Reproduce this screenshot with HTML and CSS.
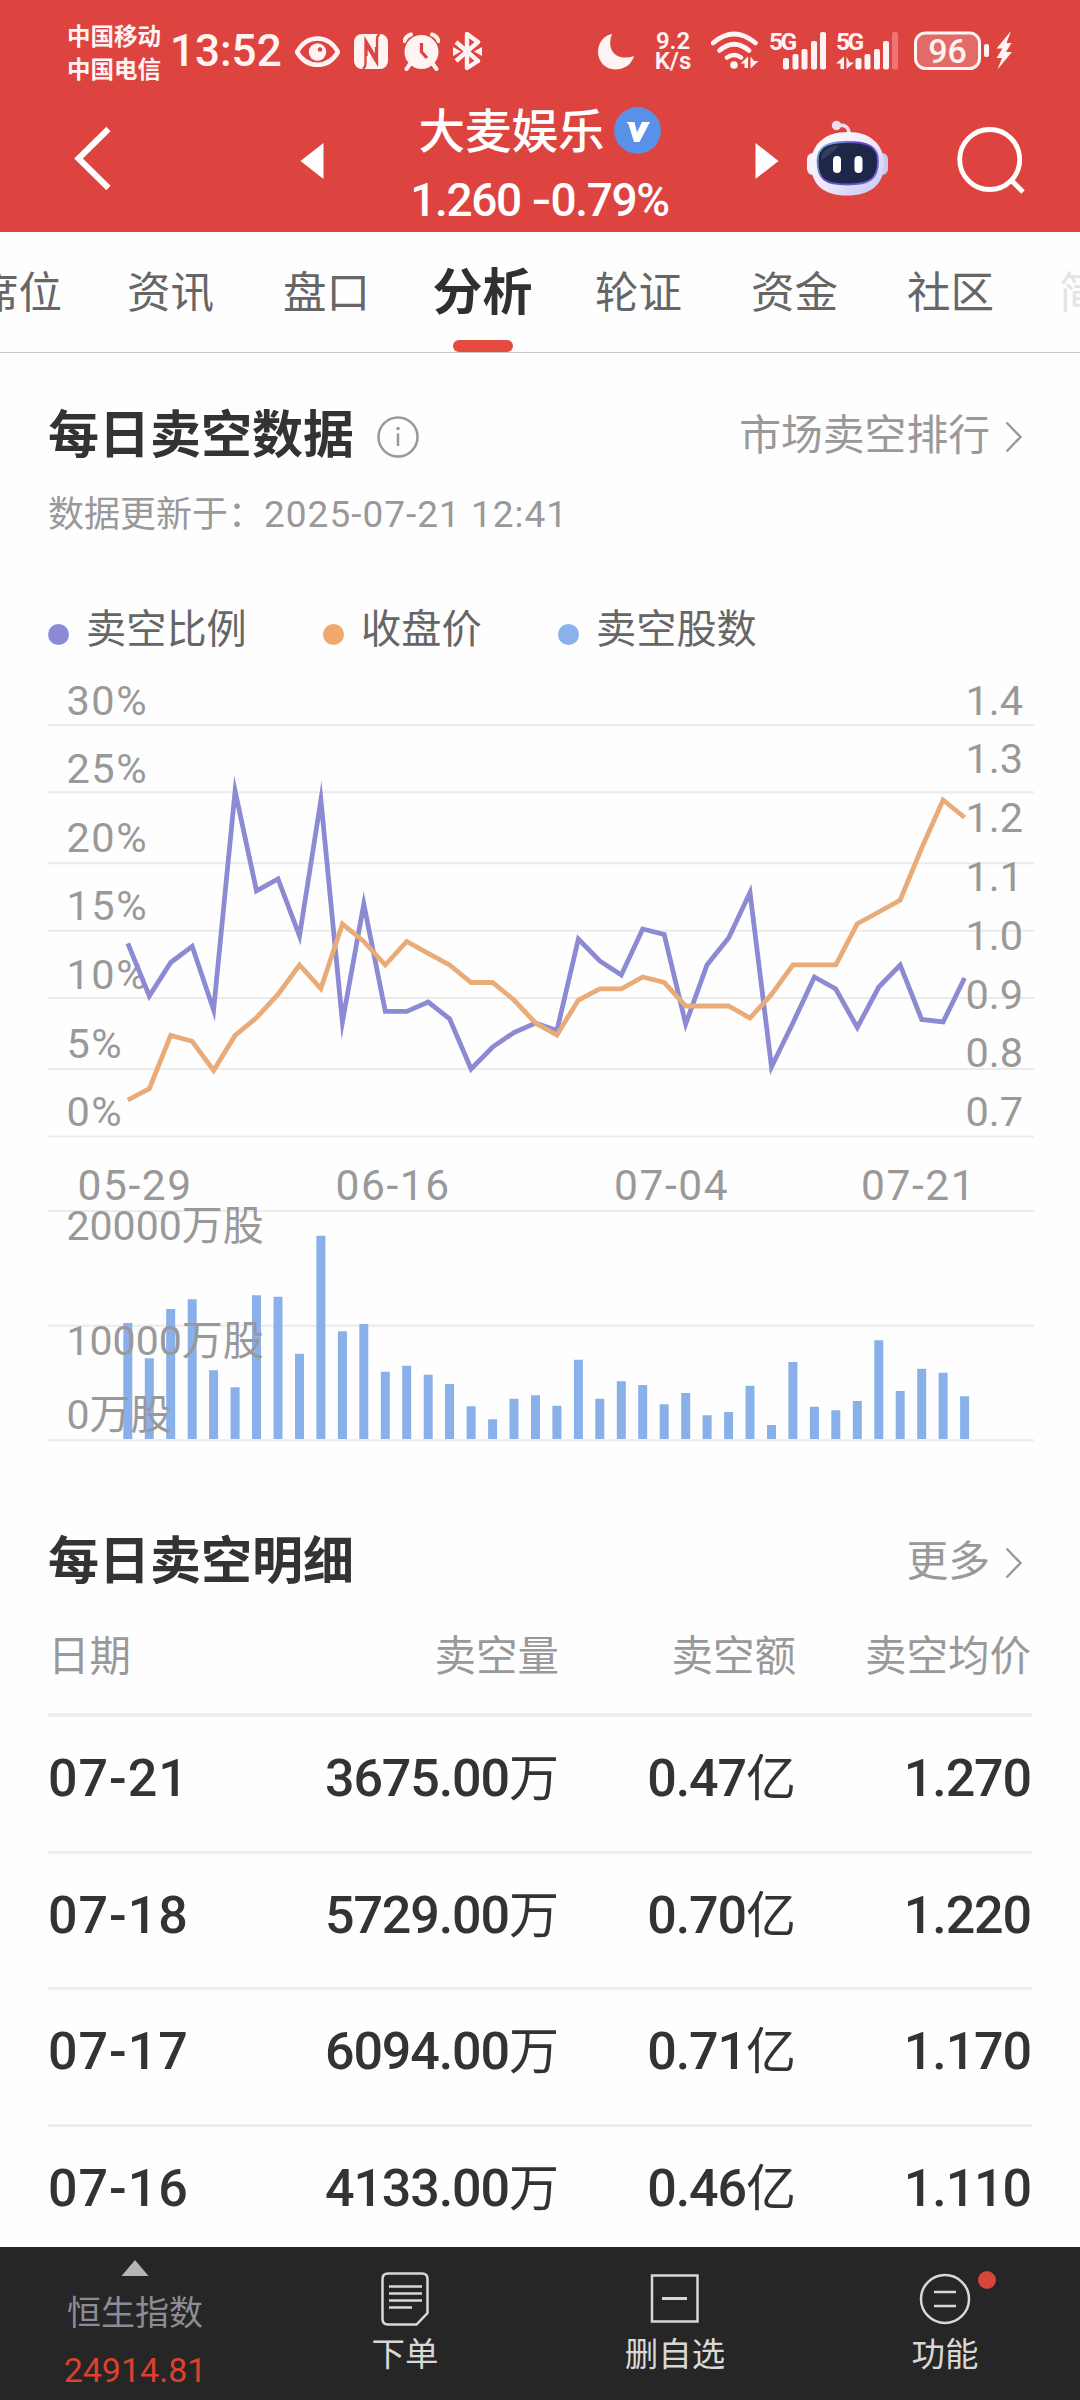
FILE: index.html
```html
<!DOCTYPE html>
<html lang="zh-CN">
<head>
  <meta charset="UTF-8">
  <title>大麦娱乐 - 分析</title>
  <link rel="stylesheet" href="styles.css">
</head>
<body>
  <div class="app">
    <header class="header">
      <div class="status-bar">
        <div class="status-left">
          <div class="carriers">
            <span>中国移动</span>
            <span>中国电信</span>
          </div>
          <span class="clock">13:52</span>
          <svg class="eye" width="45" height="40" viewBox="295 31 45 40">
            <path d="M297 52C307 34 328 34 338 52C328 69 307 69 297 52Z" fill="none" stroke="#fff3f3" stroke-width="4.500"/>
            <circle cx="317.500" cy="52" r="8.700" fill="#fff3f3"/>
            <circle cx="320" cy="49.500" r="2.200" fill="#dd4440"/>
          </svg>
          <svg class="nfc" width="34" height="40" viewBox="354 31 34 40">
            <rect x="354" y="34" width="34" height="35" rx="8" fill="#fff3f3"/>
            <path d="M363 69Q365.500 67 365.500 64V40L376 57.500V47" fill="none" stroke="#dd4440" stroke-width="2.300"/>
            <path d="M379.500 34Q377 36 377 39V63L366.500 45.500V56" fill="none" stroke="#dd4440" stroke-width="2.300"/>
          </svg>
          <svg class="alarm" width="37" height="40" viewBox="403 31 37 40">
            <circle cx="421.500" cy="52" r="17" fill="#fff3f3"/>
            <path d="M404.500 41Q406 36 411 34.500M438.500 41Q437 36 432 34.500M410 64L406.500 69M433 64L436.500 69" fill="none" stroke="#fff3f3" stroke-width="4" stroke-linecap="round"/>
            <path d="M421.500 43V52L427 58" fill="none" stroke="#dd4440" stroke-width="3.200"/>
          </svg>
          <svg class="bluetooth" width="30" height="40" viewBox="453 31 30 40">
            <path d="M456 42L478 61L467 68V34L478 42L456 61" fill="none" stroke="#fff3f3" stroke-width="4.400" stroke-linejoin="round"/>
            <path d="M453 47L461 51.500L453 56ZM482 47L474 51.500L482 56Z" fill="#fff3f3"/>
          </svg>
        </div>
        <div class="status-right">
          <svg width="36" height="40" viewBox="598 31 36 40">
            <path d="M612 34C606 50 616 62 634 56C631 66 623 69.500 615 69.500C605 69.500 598 61 598 52C598 43 604 35 612 34Z" fill="#fff3f3"/>
          </svg>
          <div class="speed">
            <span>9.2</span>
            <span>K/s</span>
          </div>
          <svg class="wifi" width="48" height="40" viewBox="711 31 48 40">
            <path d="M713 43Q734 25 755.500 43M719.500 50.500Q734 38 749 50.500M727 57.500Q734 52.500 741 57.500" fill="none" stroke="#fff3f3" stroke-width="4.600" stroke-linecap="round"/>
            <circle cx="734" cy="65" r="3.800" fill="#fff3f3"/>
            <path d="M748 56.500V68H744.500V63.500H740.500ZM750.500 56.500V68.500L758.500 61H754Z" fill="#fff3f3"/>
          </svg>
          <svg class="signal" width="56" height="40" viewBox="769 31 56 40">
            <text class="signal-label" x="768" y="50">5G</text>
            <g fill="#fff3f3">
              <rect x="782" y="58" width="6" height="11.500" rx="2"/>
              <rect x="791.500" y="54" width="6" height="15.500" rx="2"/>
              <rect x="800.500" y="49" width="6" height="20.500" rx="2"/>
              <rect x="810" y="41" width="6" height="28.500" rx="2"/>
              <rect x="819" y="32" width="6" height="37.500" rx="2"/>
            </g>
          </svg>
          <svg class="signal" width="62" height="40" viewBox="836 31 62 40">
            <text class="signal-label" x="836" y="50">5G</text>
            <path d="M844 56.500V69H840.500V63.500H836ZM846.500 56.500V69L854 62.500H849.500Z" fill="#fff3f3"/>
            <g fill="#fff3f3">
              <rect x="855.500" y="58" width="6" height="11.500" rx="2"/>
              <rect x="864.500" y="54" width="6" height="15.500" rx="2"/>
              <rect x="874" y="49" width="6" height="20.500" rx="2"/>
              <rect x="883" y="41" width="6" height="28.500" rx="2"/>
              <rect x="892" y="32" width="6" height="37.500" rx="2" fill="#ee7574"/>
            </g>
          </svg>
          <svg class="battery" width="75" height="40" viewBox="914 31 75 40">
            <rect x="915.500" y="33" width="64" height="35.500" rx="10" fill="#e36b67" stroke="#fff3f3" stroke-width="3"/>
            <rect x="984" y="44" width="5" height="13" rx="2" fill="#fff3f3"/>
            <text class="battery-label" x="947.500" y="62.800">96</text>
          </svg>
          <svg class="bolt" width="16" height="40" viewBox="996 31 16 40">
            <path d="M1011 31L996.500 48.500H1002.500L996.500 58H1002L997.500 69.500L1012 52H1006L1011.500 43H1006.500Z" fill="#fff3f3"/>
          </svg>
        </div>
      </div>

      <nav class="nav">
        <div class="nav-back">
          <svg width="40" height="66" viewBox="74 126 40 66">
            <path d="M108.500 129L78.500 158.500L108.500 188" fill="none" stroke="#fff" stroke-width="6"/>
          </svg>
        </div>
        <svg class="arrow" width="24" height="36" viewBox="0 0 24 36"><path d="M0.500 18L23.500 0V36Z" fill="#fff"/></svg>
        <div class="stock">
          <div class="stock-name">
            <span>大麦娱乐</span>
            <svg width="47" height="47" viewBox="0 0 47 47">
              <circle cx="23.500" cy="23.500" r="23.400" fill="#5a91e8"/>
              <path d="M12 15H20.500L23 25.500L28 15H36L25.500 35H20L14.500 17Z" fill="#fff"/>
            </svg>
          </div>
          <div class="stock-price">1.260 <span class="minus">-</span>0.79%</div>
        </div>
        <svg class="arrow" width="24" height="36" viewBox="0 0 24 36"><path d="M23.500 18L0.500 0V36Z" fill="#fff"/></svg>
        <div class="nav-tools">
          <svg width="82" height="78" viewBox="807 120 82 78">
            <defs>
              <linearGradient id="shell" x1="0" y1="0" x2="1" y2="1">
                <stop offset="0" stop-color="#fff"/>
                <stop offset="0.500" stop-color="#eeeafa"/>
                <stop offset="1" stop-color="#c3c6ee"/>
              </linearGradient>
              <linearGradient id="rim" x1="0" y1="0" x2="1" y2="0.600">
                <stop offset="0" stop-color="#7fc9dc"/>
                <stop offset="0.500" stop-color="#6a3fc4"/>
                <stop offset="1" stop-color="#6a5fe0"/>
              </linearGradient>
            </defs>
            <path d="M836 126Q849 123 849 134" fill="none" stroke="#f1dcea" stroke-width="3.500"/>
            <circle cx="836.500" cy="125.500" r="4.700" fill="#efdcec"/>
            <rect x="807" y="153" width="12" height="22" rx="6" fill="#f6f3fc"/>
            <rect x="876" y="153" width="12" height="22" rx="6" fill="#c9caf0"/>
            <path d="M848 132C871 132 884 145 884 164C884 185 870 195.500 847 195.500C824 195.500 811 185 811 164C811 145 824 132 848 132Z" fill="url(#shell)"/>
            <path d="M847.500 142C869 142 878 147 878 161C878 179 870 184.500 847.500 184.500C825 184.500 817.500 179 817.500 161C817.500 147 826 142 847.500 142Z" fill="#1d2748" stroke="url(#rim)" stroke-width="1.800"/>
            <path d="M821 160C821 150 829 146 839 145Q832 154 821 160Z" fill="#454d6b" opacity="0.600"/>
            <rect x="833" y="156" width="8" height="17" rx="4" fill="#fff"/>
            <rect x="854.500" y="156" width="8" height="17" rx="4" fill="#fff"/>
          </svg>
          <svg class="search" width="70" height="70" viewBox="956 125 70 70">
            <circle cx="989.700" cy="159.500" r="30" fill="none" stroke="#fff" stroke-width="4.800"/>
            <path d="M1011 180L1023 192" stroke="#fff" stroke-width="5"/>
          </svg>
        </div>
      </nav>
    </header>

    <div class="tabs">
      <a class="first">席位</a>
      <a>资讯</a>
      <a>盘口</a>
      <a class="active">分析</a>
      <a>轮证</a>
      <a>资金</a>
      <a>社区</a>
      <a class="faded">简况</a>
    </div>

    <main class="content">
      <section class="daily">
        <div class="section-head">
          <h2>每日卖空数据</h2>
          <svg class="info" width="44" height="44" viewBox="0 0 44 44">
            <circle cx="22" cy="22" r="19.500" fill="none" stroke="#999" stroke-width="2.500"/>
            <circle cx="22" cy="13.500" r="1.800" fill="#999"/>
            <path d="M22 18.500V31" stroke="#999" stroke-width="2.500"/>
          </svg>
          <a class="more">市场卖空排行
            <svg width="18" height="32" viewBox="0 0 18 32"><path d="M1.500 1.500L15.500 16L1.500 30.500" fill="none" stroke="#999" stroke-width="2.400"/></svg>
          </a>
        </div>
        <p class="updated">数据更新于：<span>2025-07-21 12:41</span></p>
        <div class="legend">
          <span class="legend-item ratio">卖空比例</span>
          <span class="legend-item price">收盘价</span>
          <span class="legend-item volume">卖空股数</span>
        </div>
      </section>

      <svg class="chart" width="1080" height="780" viewBox="0 680 1080 780">
        <g class="grid">
          <path d="M48 725H1034M48 792.300H1034M48 863.300H1034M48 930.700H1034M48 998H1034M48 1069H1034M48 1136.400H1034"/>
          <path d="M48 1211H1034M48 1325.700H1034M48 1440.300H1034"/>
        </g>
        <!-- short volume bars -->
        <path class="bars" d="M127.800 1439V1323M149.300 1439V1358.300M170.700 1439V1309M192.200 1439V1299.300M213.600 1439V1370.300M235.100 1439V1387.300M256.500 1439V1295.300M278 1439V1296.700M299.500 1439V1353.700M320.900 1439V1235.700M342.400 1439V1331.300M363.800 1439V1324M385.300 1439V1371.700M406.700 1439V1365.700M428.200 1439V1374.700M449.600 1439V1384M471.100 1439V1406.300M492.600 1439V1419.300M514 1439V1398.700M535.500 1439V1395.300M556.900 1439V1405.700M578.400 1439V1359.700M599.800 1439V1398.700M621.300 1439V1381.300M642.700 1439V1385M664.200 1439V1404.300M685.700 1439V1393M707.100 1439V1415.300M728.600 1439V1412M750 1439V1385.700M771.500 1439V1425M792.900 1439V1362M814.400 1439V1406.700M835.800 1439V1410.300M857.300 1439V1401M878.800 1439V1340.300M900.200 1439V1391M921.700 1439V1368.700M943.100 1439V1372.700M964.600 1439V1396.300"/>

        <g class="axis axis-left">
          <text x="66.500" y="715">30%</text>
          <text x="66.500" y="782.700">25%</text>
          <text x="66.500" y="851.500">20%</text>
          <text x="66.500" y="919.600">15%</text>
          <text x="66.500" y="988.800">10%</text>
          <text x="66.500" y="1057.600">5%</text>
          <text x="66.500" y="1125.700">0%</text>
        </g>
        <g class="axis axis-right">
          <text x="1023" y="715">1.4</text>
          <text x="1023" y="773">1.3</text>
          <text x="1023" y="832.300">1.2</text>
          <text x="1023" y="891">1.1</text>
          <text x="1023" y="949.600">1.0</text>
          <text x="1023" y="1008.800">0.9</text>
          <text x="1023" y="1067.200">0.8</text>
          <text x="1023" y="1125.700">0.7</text>
        </g>
        <g class="axis axis-dates">
          <text x="77.500" y="1200">05-29</text>
          <text x="335.500" y="1200">06-16</text>
          <text x="614" y="1200">07-04</text>
          <text x="861" y="1200">07-21</text>
        </g>
        <g class="axis axis-volume">
          <text x="66.500" y="1240">20000万股</text>
          <text x="66.500" y="1355">10000万股</text>
          <text x="66.500" y="1428.700">0万股</text>
        </g>

        <!-- short ratio -->
        <polyline class="line-ratio" points="127.800,943.300 149.300,996 170.700,962.500 192.200,946.300 213.600,1010 235.100,791 256.500,890.800 278,879 299.500,936 320.900,800 342.400,1022 363.800,904 385.300,1011.400 406.700,1011.400 428.200,1002 449.600,1018.800 471.100,1069 492.600,1047 514,1032.500 535.500,1023 556.900,1030.600 578.400,939 599.800,961 621.300,975 642.700,929 664.200,934.400 685.700,1024 707.100,964.800 728.600,938 750,892.600 771.500,1067 792.900,1023 814.400,977 835.800,989 857.300,1027.500 878.800,987 900.200,965 921.700,1019.500 943.100,1022 964.600,978"/>
        <!-- closing price -->
        <polyline class="line-price" points="127.800,1100 149.300,1088.700 170.700,1035.400 192.200,1041.300 213.600,1070.500 235.100,1035.400 256.500,1017.700 278,994.400 299.500,965 320.900,988.500 342.400,924 363.800,941.500 385.300,965 406.700,941.500 428.200,953.300 449.600,965 471.100,982.500 492.600,982.500 514,1000 535.500,1023 556.900,1035 578.400,1000 599.800,988.800 621.300,988.800 642.700,977 664.200,982.500 685.700,1006 707.100,1006 728.600,1006 750,1018 771.500,994.400 792.900,964.800 814.400,964.800 835.800,964.800 857.300,923.700 878.800,912 900.200,900 921.700,848 943.100,800 964.600,817.500"/>
      </svg>

      <section class="detail">
        <div class="section-head">
          <h2>每日卖空明细</h2>
          <a class="more">更多
            <svg width="18" height="32" viewBox="0 0 18 32"><path d="M1.500 1.500L15.500 16L1.500 30.500" fill="none" stroke="#999" stroke-width="2.400"/></svg>
          </a>
        </div>
        <div class="row row-head">
          <span>日期</span><span>卖空量</span><span>卖空额</span><span>卖空均价</span>
        </div>
        <div class="row">
          <span class="date">07-21</span><span>3675.00<b>万</b></span><span>0.47<b>亿</b></span><span>1.270</span>
        </div>
        <div class="row">
          <span class="date">07-18</span><span>5729.00<b>万</b></span><span>0.70<b>亿</b></span><span>1.220</span>
        </div>
        <div class="row">
          <span class="date">07-17</span><span>6094.00<b>万</b></span><span>0.71<b>亿</b></span><span>1.170</span>
        </div>
        <div class="row">
          <span class="date">07-16</span><span>4133.00<b>万</b></span><span>0.46<b>亿</b></span><span>1.110</span>
        </div>
      </section>
    </main>

    <footer class="bottom-bar">
      <div class="index">
        <svg width="28" height="16" viewBox="0 0 28 16"><path d="M14 0L27.500 16H0.500Z" fill="#b5b5b5"/></svg>
        <span class="index-name">恒生指数</span>
        <span class="index-value">24914.81</span>
      </div>
      <div class="action">
        <svg width="60" height="60" viewBox="375 2269 60 60">
          <path d="M388 2273.500H422Q427.500 2273.500 427.500 2279V2313L416.500 2324.500H388Q382.500 2324.500 382.500 2319V2279Q382.500 2273.500 388 2273.500Z" fill="none" stroke="#d8d8d8" stroke-width="2.500"/>
          <path d="M389 2286.500H422M389 2293.500H422M389 2300.500H422M389 2307.500H412" stroke="#d8d8d8" stroke-width="2.600"/>
        </svg>
        <span>下单</span>
      </div>
      <div class="action">
        <svg width="60" height="60" viewBox="645 2269 60 60">
          <rect x="652" y="2275.500" width="45.500" height="46" fill="none" stroke="#d8d8d8" stroke-width="2.500"/>
          <path d="M662 2298.500H687" stroke="#d8d8d8" stroke-width="3"/>
        </svg>
        <span>删自选</span>
      </div>
      <div class="action">
        <svg width="60" height="60" viewBox="915 2269 60 60">
          <circle cx="945" cy="2299" r="24" fill="none" stroke="#d8d8d8" stroke-width="2.500"/>
          <path d="M934 2292H956M934 2306H956" stroke="#d8d8d8" stroke-width="2.600"/>
        </svg>
        <span>功能</span>
        <i class="dot"></i>
      </div>
    </footer>
  </div>
</body>
</html>
```
FILE: styles.css
```css
/* General */
* {
  box-sizing: border-box;
}

body {
  margin: 0;
  background-color: #fefefe;
  font-family: Roboto, "Noto Sans CJK SC", sans-serif;
  color: #333;
}

svg {
  display: block;
  flex-shrink: 0;
}

.app {
  width: 1080px;
  height: 2400px;
  display: flex;
  flex-direction: column;
  overflow: hidden;
}

/* Header */
.header {
  height: 232px;
  flex-shrink: 0;
  background-color: #dd4440;
  color: #fff;
}

.status-bar {
  height: 102px;
  padding: 0 68px 0 67px;
  display: flex;
  justify-content: space-between;
  align-items: center;
  color: #fff3f3;
}

.status-left,
.status-right {
  display: flex;
  align-items: center;
}

.carriers {
  width: 103px;
  display: flex;
  flex-direction: column;
  font-size: 23.5px;
  font-weight: 700;
  line-height: 33px;
  padding-top: 6px;
}

.clock {
  width: 112px;
  font-size: 44px;
  font-weight: 500;
  line-height: 50px;
  white-space: nowrap;
}

.eye {
  margin-left: 13px;
}

.nfc {
  margin-left: 14px;
}

.alarm {
  margin-left: 15px;
}

.bluetooth {
  margin-left: 13px;
}

.speed {
  width: 42px;
  margin-left: 18px;
  display: flex;
  flex-direction: column;
  align-items: center;
  font-size: 24px;
  font-weight: 600;
  line-height: 20px;
}

.wifi {
  margin-left: 17px;
}

.signal {
  margin-left: 10.5px;
  overflow: visible;
}

.signal-label {
  font-size: 24.5px;
  font-weight: 700;
  letter-spacing: -2.5px;
  fill: #fff3f3;
}

.battery {
  margin-left: 16px;
}

.battery-label {
  font-size: 34px;
  font-weight: 500;
  text-anchor: middle;
  fill: #fff3f3;
}

.bolt {
  margin-left: 7px;
}

.nav {
  height: 130px;
  display: grid;
  grid-template-columns: 300px 24px 1fr 24px 301px;
}

.nav-back {
  padding: 24px 0 0 74px;
}

.arrow {
  margin-top: 41px;
}

.stock {
  display: flex;
  flex-direction: column;
  align-items: center;
}

.stock-name {
  display: flex;
  align-items: center;
  gap: 9px;
  height: 56px;
  font-size: 46.5px;
  font-weight: 500;
}

.stock-name span {
  padding-top: 4px;
  line-height: 56px;
}

.stock-price {
  font-size: 46px;
  font-weight: 500;
  line-height: 56px;
  padding-top: 13px;
  letter-spacing: -1.4px;
  white-space: nowrap;
}

.minus {
  font-family: Inter, sans-serif;
}

.nav-tools {
  display: flex;
  align-items: flex-start;
  padding: 18px 0 0 28px;
}

.search {
  margin: 5px 0 0 67px;
}

/* Tabs */
.tabs {
  height: 121px;
  flex-shrink: 0;
  display: flex;
  margin-left: -63.5px;
  border-bottom: 1.5px solid #c8c8c8;
}

.tabs a {
  position: relative;
  width: 156px;
  flex-shrink: 0;
  padding-top: 3px;
  text-align: center;
  font-size: 43.5px;
  line-height: 117px;
  color: #666;
}

.tabs .first {
  padding-left: 8px;
}

.tabs .active {
  font-size: 50px;
  font-weight: 700;
  color: #303030;
}

.tabs .active::after {
  content: "";
  position: absolute;
  left: 48px;
  bottom: 0;
  width: 60px;
  height: 12px;
  border-radius: 6px;
  background-color: #e44b3e;
}

.tabs .faded {
  padding-right: 8px;
  color: #e4e4e4;
}

/* Content */
.content {
  flex: 1;
  min-height: 0;
  overflow: hidden;
}

.daily {
  padding: 48px 48px 0;
}

.section-head {
  height: 70px;
  display: flex;
  align-items: center;
}

.section-head h2 {
  margin: 0;
  font-size: 51px;
  font-weight: 700;
  line-height: 70px;
}

.info {
  margin: 1px 0 0 22px;
}

.more {
  margin-left: auto;
  padding-right: 9px;
  display: flex;
  align-items: center;
  gap: 15px;
  font-size: 41.8px;
  line-height: 70px;
  color: #999;
}

.more svg {
  margin-top: 2px;
}

.updated {
  margin: 0;
  font-size: 36px;
  line-height: 88px;
  color: #999;
}

.updated span {
  font-size: 37px;
  letter-spacing: 1px;
}

.legend {
  display: flex;
  height: 103px;
  margin-top: 18px;
  align-items: center;
}

.legend-item {
  display: flex;
  align-items: center;
  padding-top: 2px;
  font-size: 40.2px;
  line-height: 60px;
  color: #666;
}

.legend-item::before {
  content: "";
  width: 21px;
  height: 21px;
  margin: 10px 17px 0 0;
  border-radius: 50%;
}

.ratio {
  width: 275px;
}

.price {
  width: 235px;
}

.ratio::before {
  background-color: #8b8ad8;
}

.price::before {
  background-color: #efa96c;
}

.volume::before {
  background-color: #8ab1ec;
}

/* Chart */
.grid path {
  stroke: #ebebeb;
  stroke-width: 2;
}

.bars {
  stroke: #8ab0ea;
  stroke-width: 9;
}

.axis {
  fill: #999;
  font-size: 41.5px;
}

.axis-left {
  letter-spacing: 1.5px;
}

.axis-right {
  text-anchor: end;
}

.axis-dates {
  font-size: 42.5px;
  letter-spacing: 1.6px;
}

.axis-volume {
  font-size: 41px;
}

.line-ratio,
.line-price {
  fill: none;
  stroke-width: 4.8;
  stroke-miterlimit: 20;
}

.line-ratio {
  stroke: #8b8ad2;
}

.line-price {
  stroke: #e9ac78;
}

/* Detail table */
.detail {
  padding: 67px 48px 0;
}

.row {
  display: grid;
  grid-template-columns: 200px 311px 237px 235px;
  height: 136.5px;
  padding-bottom: 9px;
  border-bottom: 3px solid #eee;
  align-items: center;
  font-size: 52px;
  font-weight: 500;
  letter-spacing: -1.1px;
  line-height: 70px;
  white-space: nowrap;
}

.row span {
  text-align: right;
}

.row span:first-child {
  text-align: left;
}

.row b {
  font-size: 50px;
  font-weight: 400;
  letter-spacing: 0;
}

.row .date {
  letter-spacing: 1px;
}

.row-head {
  height: 120px;
  padding-bottom: 0;
  border-bottom-width: 4px;
  font-size: 41.5px;
  font-weight: 400;
  letter-spacing: 0;
  color: #999;
}

.row-head span {
  padding-top: 3px;
}

/* Bottom bar */
.bottom-bar {
  height: 153px;
  flex-shrink: 0;
  display: grid;
  grid-template-columns: repeat(4, 1fr);
  background-color: #262626;
  color: #d8d8d8;
}

.index,
.action {
  position: relative;
  display: flex;
  flex-direction: column;
  align-items: center;
}

.index {
  padding-top: 13px;
}

.index-name {
  margin-top: 15px;
  font-size: 34px;
  line-height: 44px;
  color: #8d8c96;
}

.index-value {
  margin-top: 13px;
  font-size: 34px;
  line-height: 44px;
  color: #dc402f;
}

.action {
  padding-top: 22px;
  font-size: 33.5px;
  line-height: 46px;
}

.action span {
  margin-top: 3px;
}

.dot {
  position: absolute;
  left: 168px;
  top: 24px;
  width: 18px;
  height: 18px;
  border-radius: 50%;
  background-color: #d8453b;
}
```
